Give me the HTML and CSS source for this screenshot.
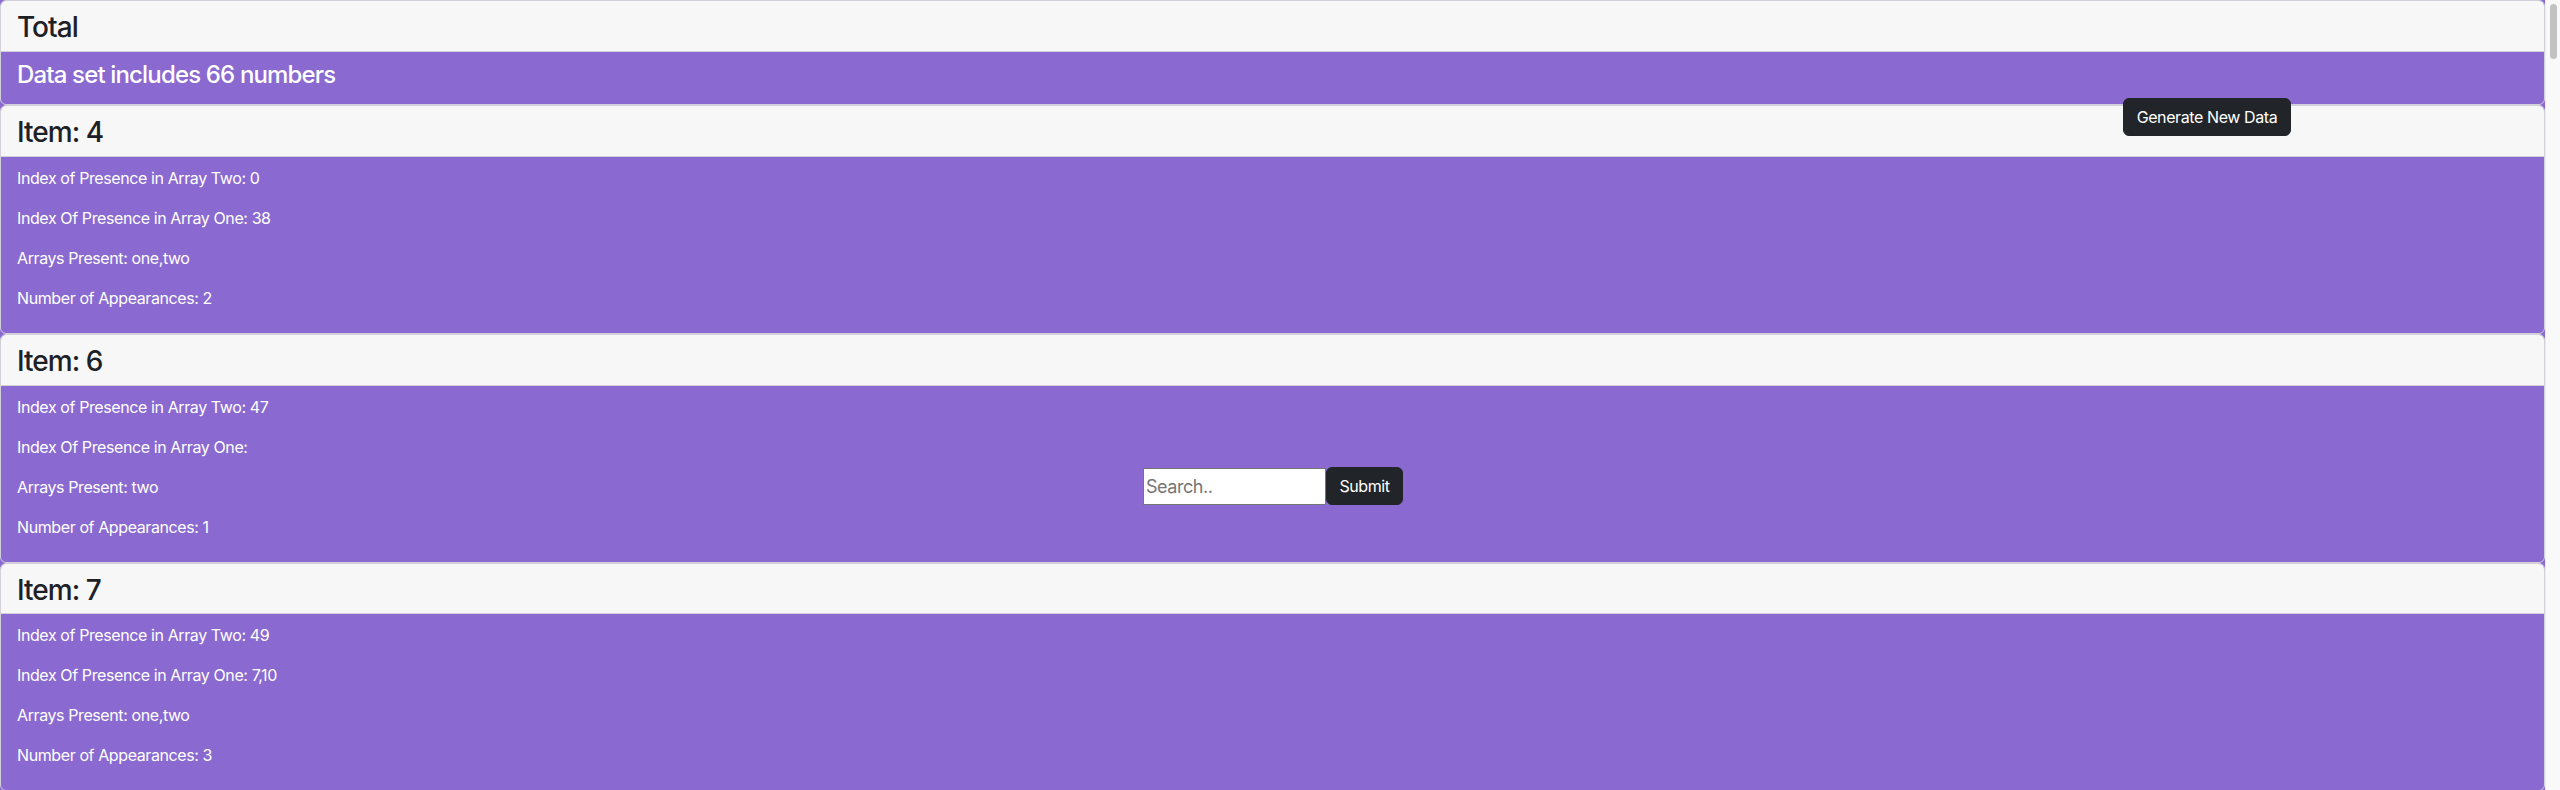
FILE: index.html
```html
<!DOCTYPE html>
<html lang="en">
<head>
<meta charset="utf-8">
<title>Data</title>
<link rel="stylesheet" href="styles.css">
</head>
<body>
<div class="app">
  <main class="content">
    <section class="card">
      <div class="card-header"><h3 class="title">Total</h3></div>
      <div class="card-body"><h4 class="summary">Data set includes 66 numbers</h4></div>
    </section>
    <section class="card">
      <div class="card-header"><h3 class="title">Item: 4</h3></div>
      <div class="card-body">
        <p>Index of Presence in Array Two: 0</p>
        <p>Index Of Presence in Array One: 38</p>
        <p>Arrays Present: one,two</p>
        <p>Number of Appearances: 2</p>
      </div>
    </section>
    <section class="card">
      <div class="card-header"><h3 class="title">Item: 6</h3></div>
      <div class="card-body">
        <p>Index of Presence in Array Two: 47</p>
        <p>Index Of Presence in Array One: </p>
        <p>Arrays Present: two</p>
        <p>Number of Appearances: 1</p>
      </div>
    </section>
    <section class="card">
      <div class="card-header"><h3 class="title">Item: 7</h3></div>
      <div class="card-body">
        <p>Index of Presence in Array Two: 49</p>
        <p>Index Of Presence in Array One: 7,10</p>
        <p>Arrays Present: one,two</p>
        <p>Number of Appearances: 3</p>
      </div>
    </section>

    <button class="btn btn-generate" type="button">Generate New Data</button>

    <form class="search">
      <input class="search-input" type="text" placeholder="Search..">
      <button class="btn btn-submit" type="submit">Submit</button>
    </form>
  </main>
  <aside class="scrollbar"><div class="thumb"></div></aside>
</div>
</body>
</html>
```

FILE: styles.css
```css
* { box-sizing: border-box; }

html, body {
  margin: 0;
  height: 100%;
  overflow: hidden;
}

body {
  background: #8a6ad0;
  font-family: Inter, "Liberation Sans", sans-serif;
  font-size: 16px;
  line-height: 1.5;
  color: #212529;
  letter-spacing: -0.025em;
}

.app {
  display: flex;
  height: 100vh;
}

.content {
  flex: 1;
  position: relative;
  overflow: hidden;
}

.card {
  border: 1px solid #d2d0d8;
  border-radius: 6px;
  overflow: hidden;
  background: #8a6ad0;
}

.card-header {
  background: #f7f7f7;
  padding: 10px 16px 6px;
  border-bottom: 1px solid #d2d0d8;
}

.title {
  margin: 0;
  font-size: 28px;
  font-weight: 500;
  line-height: 1.2;
  letter-spacing: -0.035em;
  color: #1d2024;
}

.card-body {
  padding: 9px 16px 7px;
  color: #fff;
}

.summary {
  margin: 0 0 8px;
  font-size: 24px;
  font-weight: 500;
  line-height: 1.2;
  letter-spacing: -0.035em;
}

.card-body p {
  margin: 0 0 16px;
  font-size: 16px;
  line-height: 24px;
}

.btn {
  font-family: inherit;
  font-size: 16px;
  line-height: 24px;
  letter-spacing: -0.025em;
  color: #fff;
  background: #212529;
  border: 1px solid #212529;
  border-radius: 6px;
  padding: 6px 12px;
  cursor: pointer;
}

.btn-generate {
  position: absolute;
  left: 2123px;
  top: 98px;
  width: 168px;
}

.search {
  position: absolute;
  left: 1143px;
  top: 467px;
  display: flex;
  align-items: center;
  margin: 0;
}

.search-input {
  width: 183px;
  height: 37px;
  border: 1px solid #767676;
  border-radius: 0;
  padding: 1px 2px;
  font-family: inherit;
  font-size: 18px;
  letter-spacing: -0.025em;
  background: #fff;
  color: #212529;
}

.search-input::placeholder {
  color: #757575;
}

.btn-submit {
  height: 38px;
  width: 77px;
  padding: 6px 0;
}

.scrollbar {
  width: 15px;
  flex: none;
  background: #f9f9f9;
  border-left: 1px solid #ececec;
  display: flex;
  flex-direction: column;
  padding: 4px 3px 0 4px;
}

.thumb {
  height: 55px;
  border-radius: 4px;
  background: #c2c2c2;
}
```
